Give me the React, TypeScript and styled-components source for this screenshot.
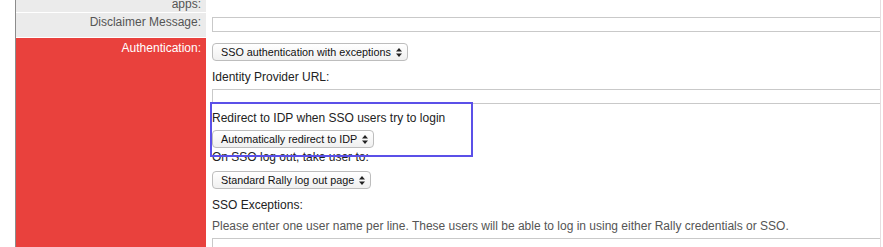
import React from "react";
import styled, {createGlobalStyle} from "styled-components";

const GlobalStyle = createGlobalStyle`
  html, body {
    margin: 0;
    padding: 0;
    background: #ffffff;
  }
  body {
    font-family: "Liberation Sans", Arial, sans-serif;
    font-size: 12px;
    color: #222;
  }
`

type SelectProps = {
    value: string
}

function FakeSelect({value}: SelectProps) {
    return (
        <SelectBox>
            <SelectText>{value}</SelectText>
            <Arrows width="6" height="9" viewBox="0 0 6 9">
                <path d="M3 0 L6 3.5 L0 3.5 Z" fill="#222"/>
                <path d="M3 9 L6 5.5 L0 5.5 Z" fill="#222"/>
            </Arrows>
        </SelectBox>
    )
}

export default function App() {
    return (
        <Page>
            <GlobalStyle/>
            <FormTable>
                <LabelCell $tight>apps:</LabelCell>
                <ValueCell/>

                <LabelCell>Disclaimer Message:</LabelCell>
                <ValueCell $pad={4}>
                    <TextInput/>
                </ValueCell>

                <LabelCell $accent>Authentication:</LabelCell>
                <ValueCell $pad={5}>
                    <SelectRow>
                        <FakeSelect value={"SSO authentication with exceptions"}/>
                    </SelectRow>
                    <FieldLabel $gap={9}>Identity Provider URL:</FieldLabel>
                    <TextInput $gap={5}/>
                    <FieldLabel $gap={7}>Redirect to IDP when SSO users try to login</FieldLabel>
                    <SelectRow $gap={5}>
                        <FakeSelect value={"Automatically redirect to IDP"}/>
                    </SelectRow>
                    <FieldLabel $gap={2}>On SSO log out, take user to:</FieldLabel>
                    <SelectRow $gap={7}>
                        <FakeSelect value={"Standard Rally log out page"}/>
                    </SelectRow>
                    <FieldLabel $gap={9}>SSO Exceptions:</FieldLabel>
                    <HelpText>Please enter one user name per line. These users will be able to log in using either Rally credentials or SSO.</HelpText>
                    <TextArea/>
                </ValueCell>
            </FormTable>
            <Highlight/>
        </Page>
    )
}

const Page = styled.div`
  position: relative;
  width: 883px;
  height: 247px;
  overflow: hidden;
  padding-left: 15px;
  box-sizing: border-box;
`
const FormTable = styled.div`
  display: grid;
  grid-template-columns: 190px 1fr;
  grid-template-rows: 12px 24px 260px;
  row-gap: 1px;
  width: 866px;
  border-left: 1px solid #8c8c8c;
  border-right: 1px solid #e6dde0;
  box-sizing: border-box;
  background: #ffffff;
`
const LabelCell = styled.div<{ $accent?: boolean, $tight?: boolean }>`
  background: ${p => p.$accent ? "#e9413d" : "#ebebeb"};
  color: ${p => p.$accent ? "#ffffff" : "#555555"};
  text-align: right;
  padding-right: 5px;
  padding-top: ${p => p.$tight ? "0" : p.$accent ? "3px" : "2px"};
  line-height: ${p => p.$tight ? "8px" : "14px"};
  font-size: 12px;
`
const ValueCell = styled.div<{ $pad?: number }>`
  display: flex;
  flex-direction: column;
  align-items: stretch;
  padding: ${p => p.$pad || 0}px 0 0 6px;
  min-width: 0;
`
const TextInput = styled.div<{ $gap?: number }>`
  height: 15px;
  margin-top: ${p => p.$gap || 0}px;
  border: 1px solid #c9c9c9;
  border-right: none;
  box-sizing: border-box;
  background: #ffffff;
`
const TextArea = styled.div`
  height: 40px;
  margin-top: 5px;
  border: 1px solid #c9c9c9;
  border-right: none;
  background: #ffffff;
`
const SelectRow = styled.div<{ $gap?: number }>`
  display: flex;
  margin-top: ${p => p.$gap || 0}px;
`
const SelectBox = styled.div`
  display: flex;
  align-items: center;
  gap: 5px;
  height: 18px;
  box-sizing: border-box;
  padding: 0 5px 0 8px;
  border: 1px solid #bdbdbd;
  border-radius: 4px;
  background: linear-gradient(#ffffff, #f0f0f0);
  color: #111;
`
const SelectText = styled.span`
  font-size: 10.8px;
  line-height: 14px;
  white-space: nowrap;
`
const Arrows = styled.svg`
  flex-shrink: 0;
  display: block;
`
const FieldLabel = styled.div<{ $gap?: number }>`
  margin-top: ${p => p.$gap || 0}px;
  font-size: 12px;
  line-height: 14px;
  color: #222;
  white-space: nowrap;
`
const HelpText = styled.div`
  margin-top: 7px;
  font-size: 12px;
  line-height: 14px;
  color: #555;
  white-space: nowrap;
`
const Highlight = styled.div`
  position: absolute;
  left: 210px;
  top: 102px;
  width: 259px;
  height: 51px;
  border: 2px solid #5b50e8;
`
